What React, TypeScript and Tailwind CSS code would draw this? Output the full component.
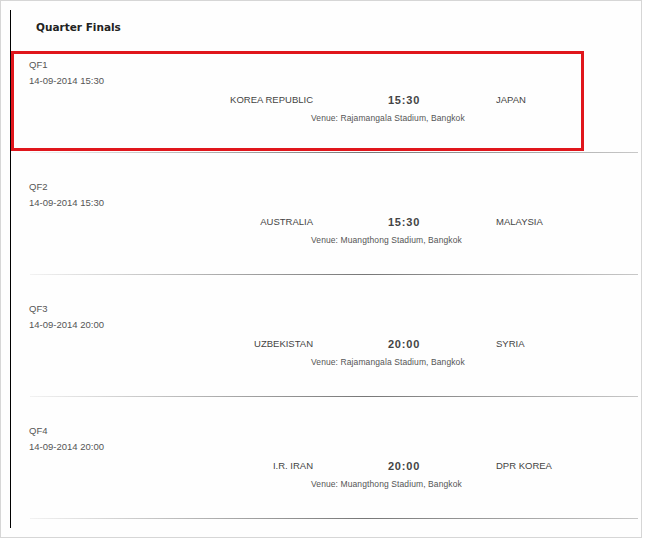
import React from "react";

type Match = { code: string; date: string; home: string; time: string; away: string; venue: string };

const matches: Match[] = [
  { code: "QF1", date: "14-09-2014 15:30", home: "KOREA REPUBLIC", time: "15:30", away: "JAPAN", venue: "Venue: Rajamangala Stadium, Bangkok" },
  { code: "QF2", date: "14-09-2014 15:30", home: "AUSTRALIA", time: "15:30", away: "MALAYSIA", venue: "Venue: Muangthong Stadium, Bangkok" },
  { code: "QF3", date: "14-09-2014 20:00", home: "UZBEKISTAN", time: "20:00", away: "SYRIA", venue: "Venue: Rajamangala Stadium, Bangkok" },
  { code: "QF4", date: "14-09-2014 20:00", home: "I.R. IRAN", time: "20:00", away: "DPR KOREA", venue: "Venue: Muangthong Stadium, Bangkok" },
];

function Row({ m }: { m: Match }) {
  return (
    <div className="h-[122px] flex flex-col">
      <div className="h-[121px] pt-[26px] text-[#555] text-[9.5px] leading-[16px]">
        <div className="pl-[18px]">{m.code}</div>
        <div className="pl-[18px]">{m.date}</div>
        <div className="flex mt-[3px] text-[#444]">
          <div className="w-[302px] text-right">{m.home}</div>
          <div className="w-[182px] text-center font-bold text-[11px] tracking-[0.8px] text-[#444]">{m.time}</div>
          <div className="pl-[1px]">{m.away}</div>
        </div>
        <div className="ml-[300px] mt-[4px] text-[8.5px] leading-[12px] tracking-[0.1px] text-[#555]">{m.venue}</div>
      </div>
      <div className="ml-[19px] w-[608px] h-[1px] bg-[linear-gradient(to_right,#f2f2f2_0%,#777777_55%,#c8c8c8_100%)]" />
    </div>
  );
}

export default function App() {
  return (
    <div className="w-[648px] h-[539px] bg-white" style={{ fontFamily: '"Liberation Sans", Arial, sans-serif' }}>
      <div className="relative w-[642px] h-[538px] border border-[#d6d6d6] bg-[#fefefe]">
        <div className="ml-[9px] mt-[9px] h-[518px] border-l border-black">
          <div className="h-[21px] pl-[25px] pt-[11px]">
            <div
              className="text-[10.5px] leading-[12px] font-bold text-[#222]"
              style={{ fontFamily: '"DejaVu Sans", Verdana, sans-serif' }}
            >
              Quarter Finals
            </div>
          </div>
          {matches.map((m) => (
            <Row key={m.code} m={m} />
          ))}
        </div>
        <div className="absolute left-[10px] top-[50px] w-[573px] h-[100px] border-[3px] border-[#e0161c]" />
      </div>
    </div>
  );
}
